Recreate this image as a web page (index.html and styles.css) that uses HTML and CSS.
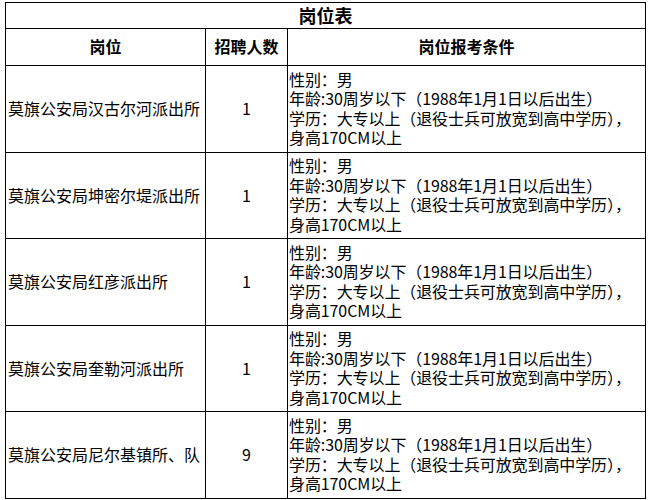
FILE: index.html
```html
<!DOCTYPE html>
<html lang="zh">
<head>
<meta charset="utf-8">
<link rel="stylesheet" href="styles.css">
</head>
<body>
<table class="jobs">
  <colgroup>
    <col class="c1"><col class="c2"><col class="c3">
  </colgroup>
  <tr class="title-row"><th colspan="3" class="title">岗位表</th></tr>
  <tr class="head-row"><th>岗位</th><th>招聘人数</th><th>岗位报考条件</th></tr>
  <tr class="r">
    <td class="name">莫旗公安局汉古尔河派出所</td>
    <td class="num">1</td>
    <td class="cond"><div>性别：男</div><div>年龄:30周岁以下（1988年1月1日以后出生）</div><div>学历：大专以上（退役士兵可放宽到高中学历），</div><div>身高170CM以上</div></td>
  </tr>
  <tr class="r">
    <td class="name">莫旗公安局坤密尔堤派出所</td>
    <td class="num">1</td>
    <td class="cond"><div>性别：男</div><div>年龄:30周岁以下（1988年1月1日以后出生）</div><div>学历：大专以上（退役士兵可放宽到高中学历），</div><div>身高170CM以上</div></td>
  </tr>
  <tr class="r">
    <td class="name">莫旗公安局红彦派出所</td>
    <td class="num">1</td>
    <td class="cond"><div>性别：男</div><div>年龄:30周岁以下（1988年1月1日以后出生）</div><div>学历：大专以上（退役士兵可放宽到高中学历），</div><div>身高170CM以上</div></td>
  </tr>
  <tr class="r">
    <td class="name">莫旗公安局奎勒河派出所</td>
    <td class="num">1</td>
    <td class="cond"><div>性别：男</div><div>年龄:30周岁以下（1988年1月1日以后出生）</div><div>学历：大专以上（退役士兵可放宽到高中学历），</div><div>身高170CM以上</div></td>
  </tr>
  <tr class="r">
    <td class="name">莫旗公安局尼尔基镇所、队</td>
    <td class="num">9</td>
    <td class="cond"><div>性别：男</div><div>年龄:30周岁以下（1988年1月1日以后出生）</div><div>学历：大专以上（退役士兵可放宽到高中学历），</div><div>身高170CM以上</div></td>
  </tr>
</table>
</body>
</html>
```
FILE: styles.css
```css
html, body {
  margin: 0;
  padding: 0;
  background: #fff;
}
body {
  padding: 2px 0 0 5px;
  font-family: "Noto Sans CJK SC", "Noto Sans", sans-serif;
  font-size: 16px;
  color: #000;
}
.jobs {
  border-collapse: collapse;
  table-layout: fixed;
  width: 640px;
  border: 1px solid #000;
}
.c1 { width: 200px; }
.c2 { width: 82px; }
.c3 { width: 358px; }
.jobs th, .jobs td {
  border: 1px solid #000;
  padding: 0;
  line-height: 19.5px;
  vertical-align: middle;
  white-space: nowrap;
  overflow: hidden;
}
.title-row { height: 26px; }
.head-row { height: 37px; }
.r { height: 86.5px; }
.jobs th {
  font-weight: bold;
  font-size: 16px;
  text-align: center;
}
.jobs th.title { font-size: 18px; }
.jobs td.name { padding-left: 2px; text-align: left; }
.num { text-align: center; }
.jobs td.cond { padding-left: 1px; text-align: left; }
.cond div { letter-spacing: -0.1px; }
```
